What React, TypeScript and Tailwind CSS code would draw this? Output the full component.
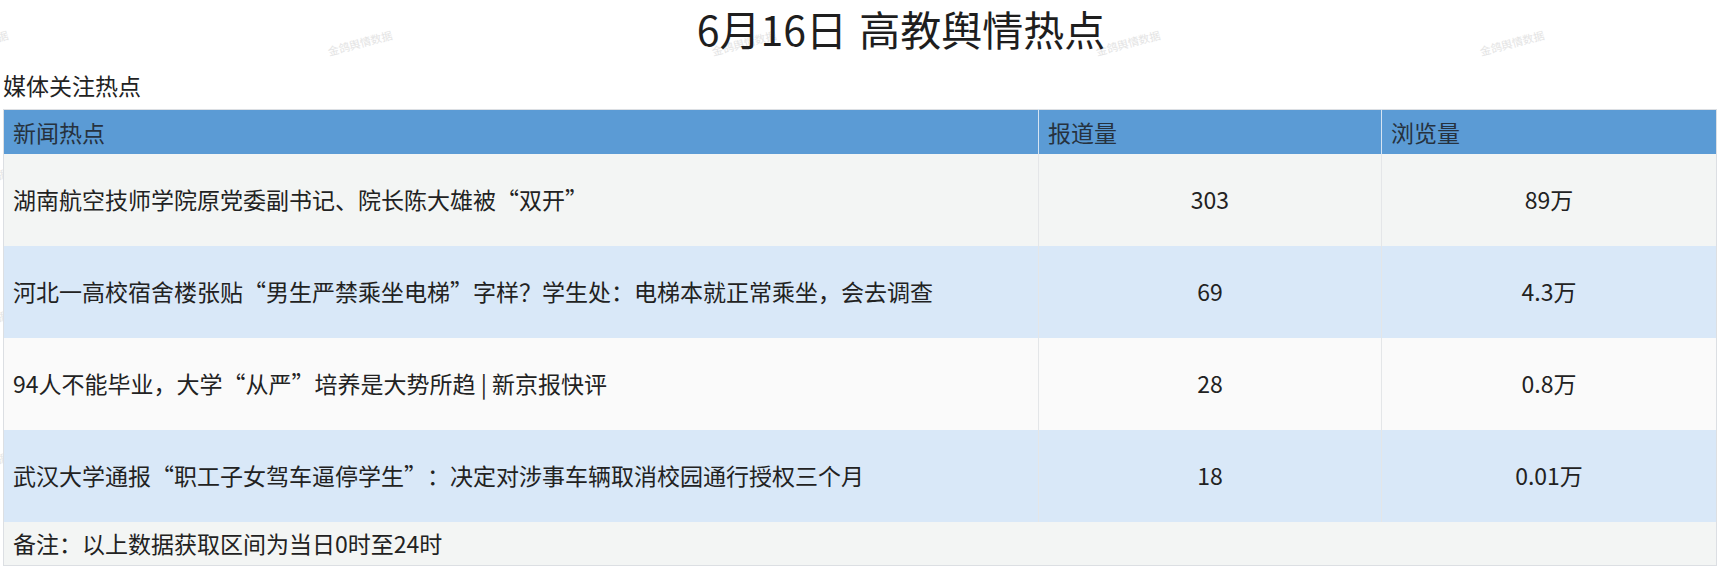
import React from "react";

const rows = [
  { title: "湖南航空技师学院原党委副书记、院长陈大雄被“双开”", count: "303", views: "89万", bg: "bg-[#f3f5f4]" },
  { title: "河北一高校宿舍楼张贴“男生严禁乘坐电梯”字样？学生处：电梯本就正常乘坐，会去调查", count: "69", views: "4.3万", bg: "bg-[#d9e8f8]" },
  { title: "94人不能毕业，大学“从严”培养是大势所趋 | 新京报快评", count: "28", views: "0.8万", bg: "bg-[#fafafa]" },
  { title: "武汉大学通报“职工子女驾车逼停学生”：决定对涉事车辆取消校园通行授权三个月", count: "18", views: "0.01万", bg: "bg-[#d9e8f8]" },
];

const marks = [
  { x: -24, y: 43 }, { x: 360, y: 43 }, { x: 744, y: 43 }, { x: 1128, y: 43 }, { x: 1512, y: 43 },
  { x: -24, y: 181 }, { x: -24, y: 323 }, { x: -24, y: 465 },
];

const App = () => {
  return (
    <div
      className="relative w-[1720px] h-[574px] overflow-hidden bg-white text-[#222] [text-spacing-trim:space-all]"
      style={{ fontFamily: '"Noto Sans CJK SC", "Noto Sans", sans-serif' }}
    >
      {/* watermark layer */}
      {marks.map((m, i) => (
        <div
          key={i}
          className="absolute -translate-x-1/2 -translate-y-1/2 -rotate-[15deg] text-[11px] leading-none whitespace-nowrap text-[#e4e4e4] select-none"
          style={{ left: m.x, top: m.y }}
        >
          金鸽舆情数据
        </div>
      ))}

      <div className="relative">
        <h1 className="h-[56px] pl-[82px] text-center text-[41px] leading-[56px] font-normal text-[#1e1e1e] [word-spacing:3px]">
          6月16日 高教舆情热点
        </h1>
        <div className="mt-[14px] pl-[3px] text-[23px] leading-[30px] text-[#222]">媒体关注热点</div>

        <table className="mt-[9px] ml-[3px] w-[1713px] table-fixed border-collapse border border-[#dcdfe3] text-[23px]">
          <colgroup>
            <col className="w-[1035px]" />
            <col className="w-[343px]" />
            <col className="w-[335px]" />
          </colgroup>
          <thead>
            <tr className="h-[44px] bg-[#5b9bd5] text-[#26323f]">
              <th className="border-r border-[#d6e4f2] pl-[9px] text-left font-normal">新闻热点</th>
              <th className="border-r border-[#d6e4f2] pl-[9px] text-left font-normal">报道量</th>
              <th className="pl-[9px] text-left font-normal">浏览量</th>
            </tr>
          </thead>
          <tbody>
            {rows.map((r) => (
              <tr key={r.count} className={`h-[92px] ${r.bg}`}>
                <td className="border-r border-[#e4e6e8] pl-[9px] whitespace-nowrap">{r.title}</td>
                <td className="border-r border-[#e4e6e8] text-center">{r.count}</td>
                <td className="text-center">{r.views}</td>
              </tr>
            ))}
            <tr className="h-[44px] bg-[#f3f5f4]">
              <td colSpan={3} className="pl-[9px]">备注：以上数据获取区间为当日0时至24时</td>
            </tr>
          </tbody>
        </table>
      </div>
    </div>
  );
};

export default App;
